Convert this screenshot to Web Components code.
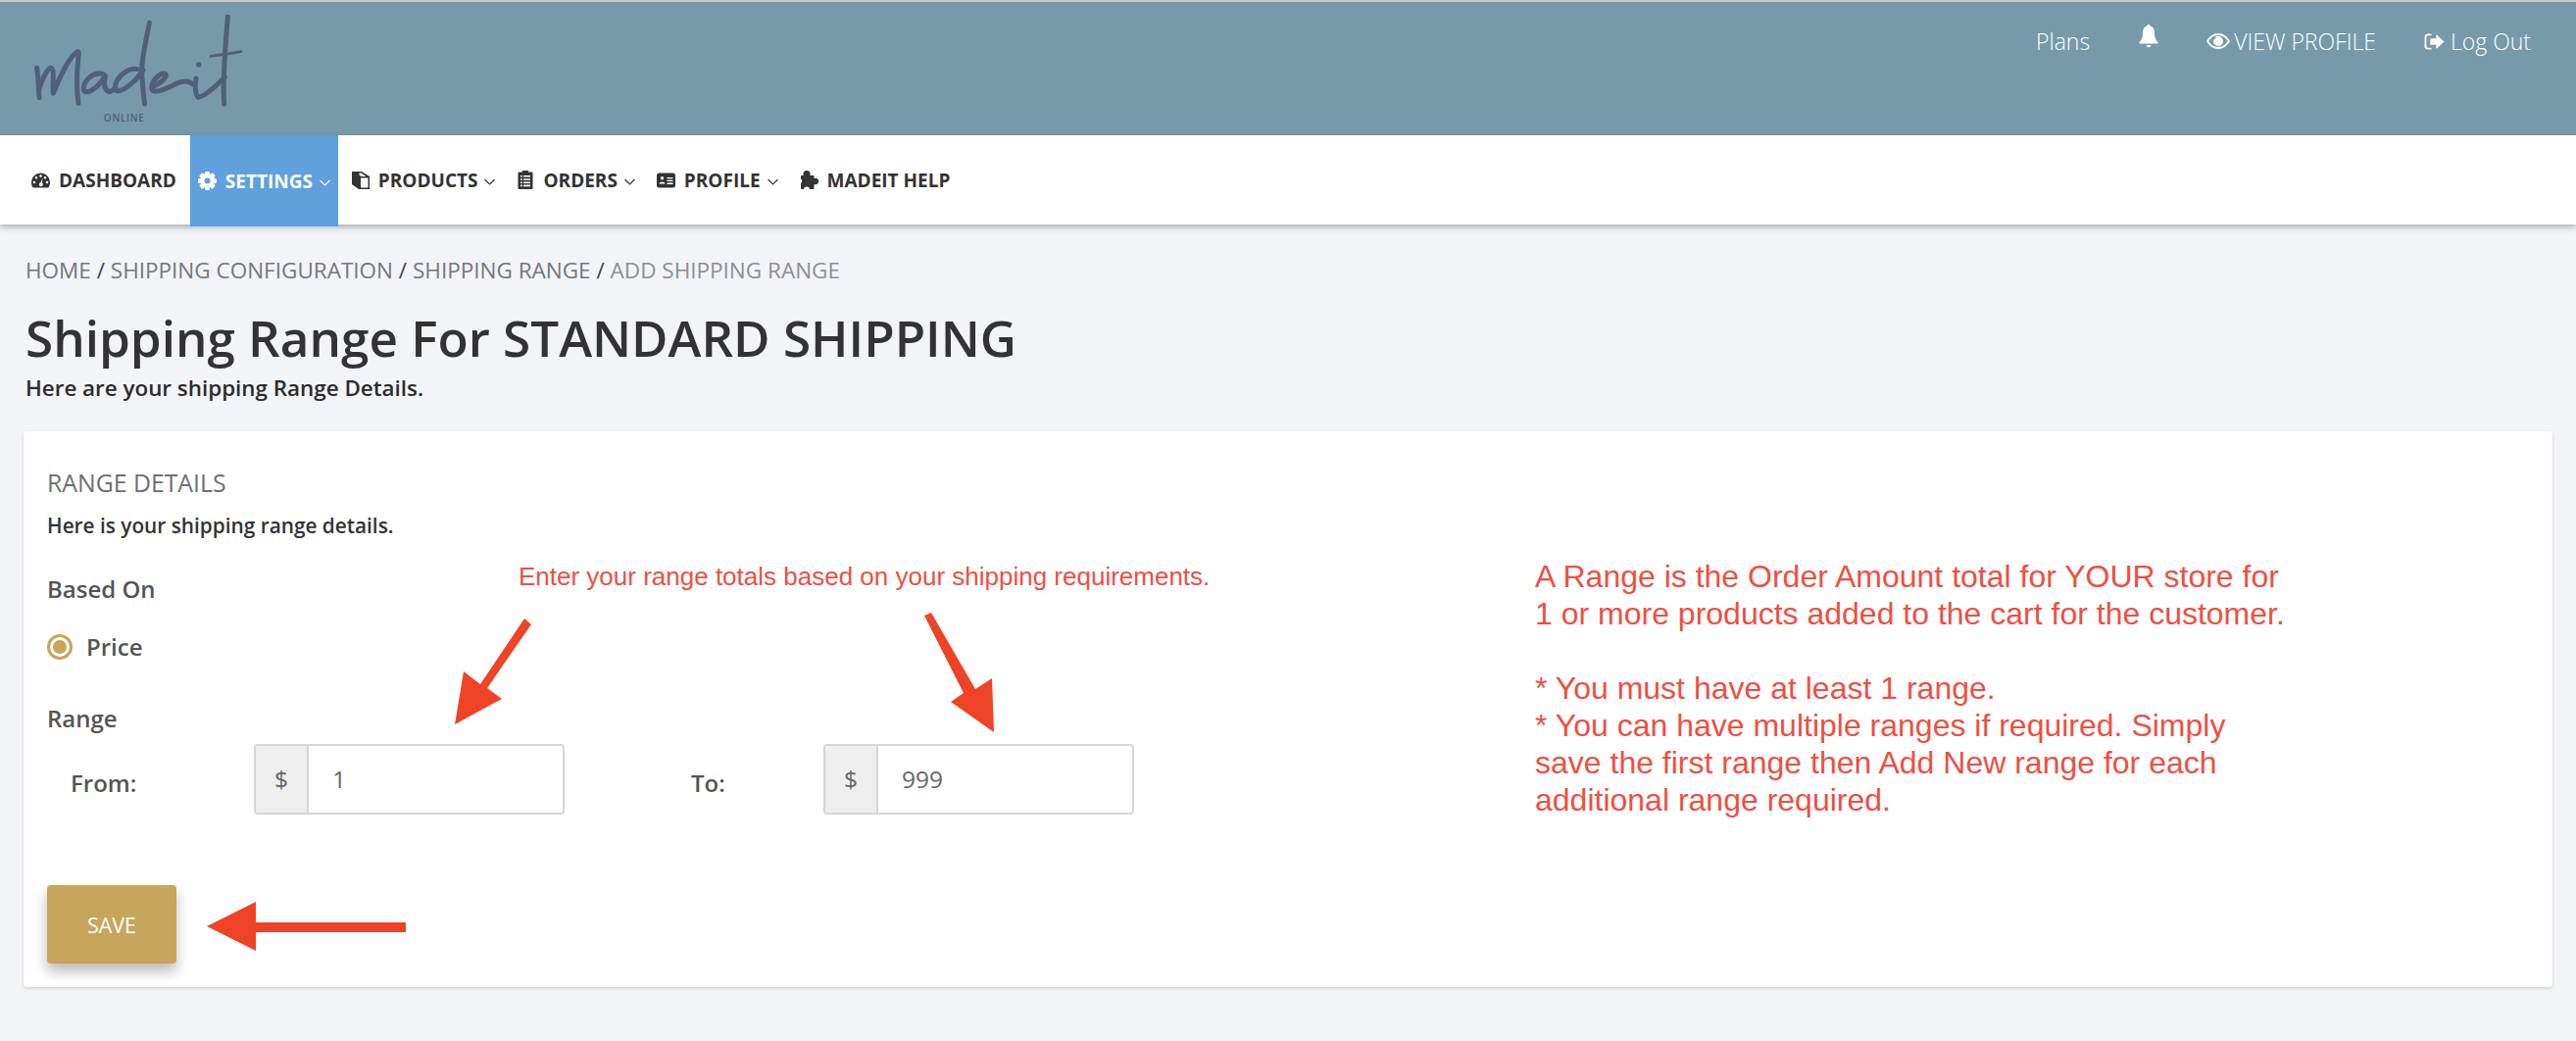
<!DOCTYPE html>
<html>
<head>
<meta charset="utf-8">
<title>Shipping Range</title>
<style>
html,body{margin:0;padding:0;height:1062px;overflow:hidden;background:#f2f4f8;font-family:"Open Sans",sans-serif;color:#333}
</style>
</head>
<body>
<top-bar></top-bar>
<main-nav>
    <nav-link label="DASHBOARD" icon="gauge" style="margin-right:3px"></nav-link>
    <nav-link label="SETTINGS" icon="cog" active caret style="margin-right:2px"></nav-link>
    <nav-link label="PRODUCTS" icon="copy" caret></nav-link>
    <nav-link label="ORDERS" icon="list" caret></nav-link>
    <nav-link label="PROFILE" icon="card" caret></nav-link>
    <nav-link label="MADEIT HELP" icon="puzzle"></nav-link>
</main-nav>
<page-head></page-head>
<range-card></range-card>
<note-layer></note-layer>

<script>
const ICONS = {
    gauge: '<svg viewBox="0 0 19 16" width="19" height="16"><path fill="currentColor" fill-rule="evenodd" d="M9.500 .5a9.500 9.500 0 0 0-9.500 9.500c0 2 .5 3.500 1.200 4.700.3.500.8.800 1.300.8h14c.5 0 1-.3 1.300-.8.700-1.200 1.200-2.700 1.200-4.700A9.500 9.500 0 0 0 9.500 .5zM9.500 2.300a1.300 1.300 0 1 1 0 2.600a1.300 1.300 0 0 1 0-2.600zM5 4a1.300 1.300 0 1 1 0 2.600a1.300 1.300 0 0 1 0-2.600zM14 4a1.300 1.300 0 1 1 0 2.600a1.300 1.300 0 0 1 0-2.600zM3 8.700a1.300 1.300 0 1 1 0 2.600a1.300 1.300 0 0 1 0-2.600zM16 8.700a1.300 1.300 0 1 1 0 2.600a1.300 1.300 0 0 1 0-2.600zM11.800 5.500l-1.100 4.900a2 2 0 1 1-1.500-.1z"/></svg>',
    cog: '<svg viewBox="0 0 19 19" width="19" height="19"><g fill="currentColor"><rect x="7" y="0" width="5" height="19" rx="1.200"/><rect x="7" y="0" width="5" height="19" rx="1.200" transform="rotate(45 9.500 9.500)"/><rect x="7" y="0" width="5" height="19" rx="1.200" transform="rotate(90 9.500 9.500)"/><rect x="7" y="0" width="5" height="19" rx="1.200" transform="rotate(135 9.500 9.500)"/></g><circle cx="9.500" cy="9.500" r="5.200" fill="none" stroke="currentColor" stroke-width="4"/><circle cx="9.500" cy="9.500" r="3" fill="var(--hole)"/></svg>',
    copy: '<svg viewBox="0 0 19 18" width="19" height="18"><path fill="currentColor" d="M1 0H11L19 5V18H8L1 13Z"/><path fill="#fff" d="M8.500 1.500H10.500L15.500 5H10.500L8.500 3.500ZM10 6.500H17.500V16.500H10Z"/></svg>',
    list: '<svg viewBox="-1.500 0 18 19" width="18" height="19"><path fill="currentColor" fill-rule="evenodd" d="M1 1.500h3.500V0h6v1.500H14a1 1 0 0 1 1 1V18a1 1 0 0 1-1 1H1a1 1 0 0 1-1-1V2.500a1 1 0 0 1 1-1zM2.500 5v1.600h1.800V5zM5.500 5v1.600h7V5zM2.500 8.200v1.600h1.800V8.200zM5.500 8.200v1.600h7V8.200zM2.500 11.400V13h1.800v-1.600zM5.500 11.400V13h7v-1.600zM2.500 14.600v1.600h1.800v-1.600zM5.500 14.600v1.600h7v-1.600z"/></svg>',
    card: '<svg viewBox="0 0 19 16" width="19" height="16"><path fill="currentColor" fill-rule="evenodd" d="M2.500 .5h14A2.500 2.500 0 0 1 19 3v10a2.500 2.500 0 0 1-2.500 2.500h-14A2.500 2.500 0 0 1 0 13V3A2.500 2.500 0 0 1 2.500 .5zM5.500 4a1.700 1.700 0 1 0 0 3.400a1.700 1.700 0 0 0 0-3.400zM2.500 11.500h6c0-2.800-6-2.800-6 0zM10.500 5v1.300h6V5zM10.500 7.800v1.300h6V7.800zM10.500 10.600v1.300h6v-1.300z"/></svg>',
    puzzle: '<svg viewBox="0 0 19 19" width="19" height="19"><g fill="currentColor"><rect x="1" y="5" width="13.500" height="14" rx="1"/><ellipse cx="7" cy="3.500" rx="3.500" ry="3.500"/><ellipse cx="15.500" cy="11" rx="3.500" ry="3.200"/></g><ellipse cx="7" cy="19" rx="3" ry="2.600" fill="#fff"/><ellipse cx="0" cy="10.500" rx="2.200" ry="2.500" fill="#fff"/></svg>',
    bell: '<svg viewBox="0 0 20 24" width="20" height="24"><path fill="currentColor" d="M10 0c1 0 1.500.6 1.600 1.500C15 2.300 16 5 16 9c0 5 2 7 3.500 9.500.3.500 0 1-.6 1H1.100c-.6 0-.9-.5-.6-1C2 16 4 14 4 9c0-4 1-6.700 4.400-7.500C8.500.6 9 0 10 0zM7.500 21h5c-.3 1.500-1.300 2.300-2.500 2.300S7.800 22.500 7.500 21z"/></svg>',
    eye: '<svg viewBox="0 0 24 18" width="24" height="18"><path fill="currentColor" fill-rule="evenodd" d="M12 1c5 0 9.200 3 12 8-2.800 5-7 8-12 8S2.800 14 0 9c2.800-5 7-8 12-8zM12 3C8 3 4.600 5.300 2.200 9 4.600 12.700 8 15 12 15s7.400-2.300 9.800-6C19.400 5.300 16 3 12 3zM12 4a5 5 0 1 1 0 10a5 5 0 0 1 0-10zM9.500 5.500c-1.500 0-2.500 1.500-2 3 .3-1.300 1.300-2.200 2.800-2.500.4-.1.200-.5-.8-.5z"/></svg>',
    logout: '<svg viewBox="0 0 22 20" width="21" height="19"><path fill="none" stroke="currentColor" stroke-width="2" stroke-linecap="round" d="M7 2.500H4a2.500 2.500 0 0 0-2.500 2.500v10A2.500 2.500 0 0 0 4 17.500h3"/><path fill="currentColor" d="M13 2l8.500 8-8.500 8v-4.500H6.500v-7H13z"/></svg>'
};

class TopBar extends HTMLElement{
    constructor(){
        super();
        this.attachShadow({ mode: 'open' });
        this.shadowRoot.innerHTML = `
            <style>
            :host{
                display: flex;
                justify-content: space-between;
                height: 136px;
                background: #769aaa;
                border-top: 2px solid #c4c8c8;
                color: #fff;
            }
            #logo{display: block}
            #logoText{
                font: 600 30px "Open Sans", sans-serif;
                letter-spacing: 2px;
                fill: #4f6078;
            }
            #links{
                display: flex;
                align-items: flex-start;
                padding: 24px 46px 0 0;
                font-size: 23px;
                font-weight: 300;
                line-height: 32px;
            }
            #links span{
                display: flex;
                align-items: center;
            }
            #plans{margin-right: 50px}
            #bell{margin-right: 49px; position: relative; top: -1px}
            #view{margin-right: 49px; gap: 4px}
            #out{gap: 6px}
            </style>
            <svg id="logo" width="280" height="136" viewBox="0 0 840 408" role="img" aria-label="madeit online">
                <g fill="none" stroke="#4f6078" stroke-width="15" stroke-linecap="round" stroke-linejoin="round" transform="translate(0 -6)">
                    <path d="M113 208C118 240 118 275 120 299"/>
                    <path d="M120 272C132 236 146 208 156 208C168 210 160 262 163 286C178 246 212 170 238 158C248 156 226 220 240 316"/>
                    <path d="M318 228C290 215 256 245 256 272C258 292 292 280 322 232C316 258 320 280 336 280"/>
                    <path d="M336 280C344 278 350 274 354 268M420 212C390 205 352 240 352 270C354 292 400 270 438 215"/>
                    <path d="M457 70C446 130 428 200 436 250C438 280 440 300 443 318"/>
                    <path d="M466 266C490 256 516 234 506 226C492 220 466 244 464 268C464 288 494 280 540 256C560 246 580 246 596 262"/>
                    <path d="M600 240C596 262 598 286 606 298C626 296 660 264 688 236"/>
                    <path d="M697 52C692 120 680 230 686 318"/>
                    <path d="M644 172C680 168 712 162 738 158" stroke-width="8"/>
                </g>
                <circle cx="608" cy="192" r="8" fill="#4f6078"/>
                <text id="logoText" x="380" y="365" text-anchor="middle">ONLINE</text>
            </svg>
            <div id="links">
                <span id="plans">Plans</span>
                <span id="bell">${ICONS.bell}</span>
                <span id="view">${ICONS.eye}VIEW PROFILE</span>
                <span id="out">${ICONS.logout}Log Out</span>
            </div>
        `;
    }
}
window.customElements.define('top-bar', TopBar);

class MainNav extends HTMLElement{
    constructor(){
        super();
        this.attachShadow({ mode: 'open' });
        this.shadowRoot.innerHTML = `
            <style>
            :host{
                display: flex;
                align-items: stretch;
                height: 91px;
                padding-left: 21px;
                background: #fff;
                box-shadow: 0 3px 6px rgba(0,0,0,.28);
                position: relative;
            }
            </style>
            <slot></slot>
        `;
    }
}
window.customElements.define('main-nav', MainNav);

class NavLink extends HTMLElement{
    constructor(){
        super();
        this.attachShadow({ mode: 'open' });
        this.shadowRoot.innerHTML = `
            <style>
            :host{
                --hole: #fff;
                display: flex;
                align-items: center;
                gap: 9px;
                padding: 0 11px;
                font-size: 19px;
                font-weight: 700;
                color: #333;
                white-space: nowrap;
            }
            :host([active]){
                --hole: #5fa0dd;
                background: #5fa0dd;
                color: #fff;
                height: 93px;
                padding: 0 8px;
            }
            svg{display: block}
            #caret{margin-left: -2px; margin-top: 4px}
            </style>
            <span id="icon"></span>
            <span id="label"></span>
        `;
    }
    connectedCallback(){
        this.shadowRoot.querySelector('#icon').innerHTML = ICONS[this.getAttribute('icon')];
        this.shadowRoot.querySelector('#label').textContent = this.getAttribute('label');
        if(this.hasAttribute('caret')){
            const s = document.createElement('span');
            s.id = 'caret';
            s.innerHTML = '<svg width="11" height="7" viewBox="0 0 11 7"><path d="M.5 1l5 5 5-5" fill="none" stroke="currentColor" stroke-width="1.100"/></svg>';
            this.shadowRoot.appendChild(s);
        }
    }
}
window.customElements.define('nav-link', NavLink);

class PageHead extends HTMLElement{
    constructor(){
        super();
        this.attachShadow({ mode: 'open' });
        this.shadowRoot.innerHTML = `
            <style>
            :host{
                display: block;
                padding: 31px 26px 0;
                height: 211px;
                box-sizing: border-box;
            }
            #crumbs{
                font-size: 22.500px;
                line-height: 32px;
                color: #777;
            }
            #crumbs b{font-weight: 400; color: #8f8f8f}
            #crumbs i{font-style: normal; color: #444}
            h1{
                margin: 19px 0 0;
                font-size: 51.200px;
                line-height: 66px;
                font-weight: 600;
                color: #333;
            }
            p{
                margin: 5px 0 0;
                font-size: 22.400px;
                line-height: 28px;
                font-weight: 600;
                color: #2c2c2c;
            }
            </style>
            <div id="crumbs">HOME <i>/</i> SHIPPING CONFIGURATION <i>/</i> SHIPPING RANGE <i>/</i> <b>ADD SHIPPING RANGE</b></div>
            <h1>Shipping Range For STANDARD SHIPPING</h1>
            <p>Here are your shipping Range Details.</p>
        `;
    }
}
window.customElements.define('page-head', PageHead);

class MoneyInput extends HTMLElement{
    constructor(){
        super();
        this.attachShadow({ mode: 'open' });
        this.shadowRoot.innerHTML = `
            <style>
            :host{
                display: flex;
                width: 317px;
                height: 72px;
                box-sizing: border-box;
                border: 2px solid #d6d6d6;
                border-radius: 4px;
                font-size: 24.500px;
                color: #666;
                background: #fff;
            }
            #add{
                width: 52px;
                display: flex;
                align-items: center;
                justify-content: center;
                padding-bottom: 2px;
                background: #eee;
                border-right: 2px solid #d6d6d6;
            }
            #val{
                flex: 1;
                display: flex;
                align-items: center;
                padding: 0 0 2px 24px;
            }
            </style>
            <div id="add">$</div>
            <div id="val"><slot></slot></div>
        `;
    }
}
window.customElements.define('money-input', MoneyInput);

class RangeCard extends HTMLElement{
    constructor(){
        super();
        this.attachShadow({ mode: 'open' });
        this.shadowRoot.innerHTML = `
            <style>
            :host{
                display: block;
                margin: 0 24px;
                height: 567px;
                padding: 36px 24px 0;
                box-sizing: border-box;
                background: #fff;
                border-radius: 4px;
                box-shadow: 0 1px 3px rgba(0,0,0,.18);
            }
            h2{
                margin: 0;
                font-size: 24.800px;
                line-height: 32px;
                font-weight: 400;
                color: #6f6f6f;
            }
            #sub{
                margin-top: 15px;
                font-size: 20.800px;
                line-height: 26px;
                font-weight: 600;
                color: #333;
            }
            .lab{
                font-size: 24px;
                line-height: 32px;
                font-weight: 600;
                color: #555;
            }
            #based{margin-top: 36px}
            #radio{
                display: flex;
                align-items: center;
                gap: 14px;
                margin-top: 27px;
            }
            #dot{
                width: 26px;
                height: 26px;
                box-sizing: border-box;
                border: 3px solid #c7a55c;
                border-radius: 50%;
                padding: 3px;
            }
            #dot::after{
                content: '';
                display: block;
                height: 100%;
                background: #c7a55c;
                border-radius: 50%;
            }
            #range{margin-top: 41px}
            #row{
                display: grid;
                grid-template-columns: 211px 317px 129px 135px 317px;
                align-items: center;
                margin-top: 10px;
                height: 72px;
            }
            #from{padding-left: 24px; margin-top: 8px}
            #to{margin-top: 8px}
            #save{
                display: flex;
                align-items: center;
                justify-content: center;
                margin-top: 72px;
                width: 132px;
                height: 80px;
                background: #c7a55c;
                border-radius: 4px;
                color: #fff;
                font-size: 21.500px;
                box-shadow: 0 8px 14px rgba(0,0,0,.28);
            }
            </style>
            <h2>RANGE DETAILS</h2>
            <div id="sub">Here is your shipping range details.</div>
            <div class="lab" id="based">Based On</div>
            <div class="lab" id="radio"><span id="dot"></span>Price</div>
            <div class="lab" id="range">Range</div>
            <div id="row">
                <div class="lab" id="from">From:</div>
                <money-input>1</money-input>
                <div></div>
                <div class="lab" id="to">To:</div>
                <money-input>999</money-input>
            </div>
            <div id="save">SAVE</div>
        `;
    }
}
window.customElements.define('range-card', RangeCard);

// red annotations that were drawn over the screenshot
class NoteLayer extends HTMLElement{
    constructor(){
        super();
        this.attachShadow({ mode: 'open' });
        this.shadowRoot.innerHTML = `
            <style>
            :host{
                position: absolute;
                left: 0;
                top: 0;
                width: 2628px;
                height: 1062px;
                pointer-events: none;
                font-family: "Liberation Sans", Arial, sans-serif;
                color: #ee4f42;
            }
            svg{position: absolute; left: 0; top: 0}
            #top{
                position: absolute;
                left: 529px;
                top: 572px;
                font-size: 26px;
                line-height: 32px;
                white-space: nowrap;
            }
            #side{
                position: absolute;
                left: 1566px;
                top: 569px;
                font-size: 32px;
                line-height: 38px;
                white-space: nowrap;
            }
            </style>
            <svg width="2628" height="1062">
                <path fill="#ee4327" d="M535 631L542 637L497 702L512 713L464 739L473 685L490 698Z"/>
                <path fill="#ee4327" d="M943 628L950 625L995 703L1012 692L1014 747L970 716L983 707Z"/>
                <path fill="#ee4327" d="M211 945L261 920V941H414V951H261V970Z"/>
            </svg>
            <div id="top">Enter your range totals based on your shipping requirements.</div>
            <div id="side">A Range is the Order Amount total for YOUR store for<br>1 or more products added to the cart for the customer.<br><br>* You must have at least 1 range.<br>* You can have multiple ranges if required. Simply<br>save the first range then Add New range for each<br>additional range required.</div>
        `;
    }
}
window.customElements.define('note-layer', NoteLayer);
</script>
</body>
</html>
